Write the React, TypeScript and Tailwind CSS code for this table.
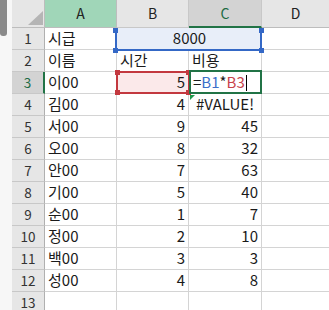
import React from "react";

const FONT = { fontFamily: '"Noto Sans CJK KR", "Noto Sans", sans-serif' };

type Cell = { v: string; align?: "left" | "right" | "center" };

const rows: Cell[][] = [
  [{ v: "시급" }, { v: "" }, { v: "" }],
  [{ v: "이름" }, { v: "시간" }, { v: "비용" }],
  [{ v: "이00" }, { v: "5", align: "right" }, { v: "" }],
  [{ v: "김00" }, { v: "4", align: "right" }, { v: "#VALUE!", align: "center" }],
  [{ v: "서00" }, { v: "9", align: "right" }, { v: "45", align: "right" }],
  [{ v: "오00" }, { v: "8", align: "right" }, { v: "32", align: "right" }],
  [{ v: "안00" }, { v: "7", align: "right" }, { v: "63", align: "right" }],
  [{ v: "기00" }, { v: "5", align: "right" }, { v: "40", align: "right" }],
  [{ v: "순00" }, { v: "1", align: "right" }, { v: "7", align: "right" }],
  [{ v: "정00" }, { v: "2", align: "right" }, { v: "10", align: "right" }],
  [{ v: "백00" }, { v: "3", align: "right" }, { v: "3", align: "right" }],
  [{ v: "성00" }, { v: "4", align: "right" }, { v: "8", align: "right" }],
  [{ v: "" }, { v: "" }, { v: "" }],
];

function alignClass(a?: string) {
  if (a === "right") return "justify-end pr-[3px]";
  if (a === "center") return "justify-center";
  return "justify-start pl-[3px]";
}

function Handle({ className }: { className: string }) {
  return <div className={`absolute w-[5px] h-[5px] ${className}`} />;
}

export default function App() {
  return (
    <div className="w-[329px] h-[310px] overflow-hidden bg-white flex text-[#1a1a1a]" style={FONT}>
      {/* left scroll strip */}
      <div className="w-[12px] shrink-0 bg-[#f7f7f7] relative">
        <div className="absolute left-0 top-0 w-[7px] h-[36px] bg-[#8a8a8a] rounded-b-[3px]" />
      </div>

      <div className="relative flex-1 grid grid-cols-[33px_72px_72px_73px_1fr] grid-rows-[28px_repeat(13,22px)]">
        {/* corner */}
        <div className="bg-[#e6e6e6] border-r border-b border-[#bdbdbd] relative">
          <svg className="absolute left-0 top-0" width="33" height="28">
            <polygon points="16,25 31,25 31,11" fill="#b5b5b5" />
          </svg>
        </div>
        {/* column headers */}
        <div className="bg-[#a0d6b8] border-r border-b border-[#bdbdbd] flex items-center justify-center text-[14px] text-[#222]">A</div>
        <div className="bg-[#e6e6e6] border-r border-b border-[#c8c8c8] flex items-center justify-center text-[14px] text-[#222]">B</div>
        <div className="bg-[#d3d3d3] border-r border-[#c8c8c8] border-b-2 border-b-[#217346] flex items-center justify-center text-[14px] text-[#1d6b45]">C</div>
        <div className="bg-[#e6e6e6] border-b border-[#bdbdbd] flex items-center justify-center text-[14px] text-[#222]">D</div>

        {rows.map((r, i) => {
          const n = i + 1;
          const sel = n === 3;
          return (
            <React.Fragment key={n}>
              <div
                className={`border-b border-[#c8c8c8] flex items-center justify-center text-[13.5px] ${
                  sel
                    ? "bg-[#d3d3d3] text-[#1d6b45] border-r-2 border-r-[#217346]"
                    : "bg-[#e6e6e6] text-[#333] border-r border-r-[#b0b0b0]"
                }`}
              >
                {n}
              </div>
              {n === 1 ? (
                <>
                  <div className="border-r border-b border-[#d4d4d4] flex items-center pl-[3px] text-[15px]">{r[0].v}</div>
                  <div className="col-span-2 bg-[#e8eef9] border-b border-[#d4d4d4] flex items-center justify-center text-[15px]">8000</div>
                </>
              ) : (
                r.map((c, j) => (
                  <div
                    key={j}
                    className={`border-r border-b border-[#d4d4d4] flex items-center text-[15px] whitespace-nowrap ${alignClass(c.align)} ${
                      n === 3 && j === 1 ? "bg-[#fbe9ea]" : ""
                    }`}
                  >
                    {n === 3 && j === 2 ? (
                      <span className="pl-[1px] flex items-center">
                        <span>=</span>
                        <span className="text-[#3d6fc9]">B1</span>
                        <span>*</span>
                        <span className="text-[#c8434a]">B3</span>
                        <span className="inline-block w-[1px] h-[16px] bg-black ml-[1px]" />
                      </span>
                    ) : (
                      c.v
                    )}
                  </div>
                ))
              )}
              <div className="border-b border-[#d4d4d4]" />
            </React.Fragment>
          );
        })}

        {/* B1:C1 reference range */}
        <div className="absolute left-[103px] top-[28px] w-[147px] h-[23px] border-l-2 border-r-2 border-b-2 border-[#3468c6] pointer-events-none">
          <Handle className="bg-[#3468c6] -left-[4px] top-[0px]" />
          <Handle className="bg-[#3468c6] -left-[4px] -bottom-[4px]" />
          <Handle className="bg-[#3468c6] -right-[4px] top-[0px]" />
          <Handle className="bg-[#3468c6] -right-[4px] -bottom-[4px]" />
        </div>

        {/* B3 reference range */}
        <div className="absolute left-[104px] top-[71px] w-[74px] h-[23px] border-2 border-[#c3383f] pointer-events-none">
          <Handle className="bg-[#c3383f] -left-[3px] -top-[3px]" />
          <Handle className="bg-[#c3383f] -left-[3px] -bottom-[3px]" />
          <Handle className="bg-[#c3383f] -right-[3px] -top-[3px]" />
          <Handle className="bg-[#c3383f] -right-[3px] -bottom-[3px]" />
        </div>

        {/* active cell C3 */}
        <div className="absolute left-[177px] top-[70px] w-[73px] h-[24px] border-2 border-[#217346] pointer-events-none" />

        {/* error indicator on C4 */}
        <svg className="absolute left-[178px] top-[95px]" width="6" height="6">
          <polygon points="0,0 5,0 0,5" fill="#1f9b4c" />
        </svg>
      </div>
    </div>
  );
}
